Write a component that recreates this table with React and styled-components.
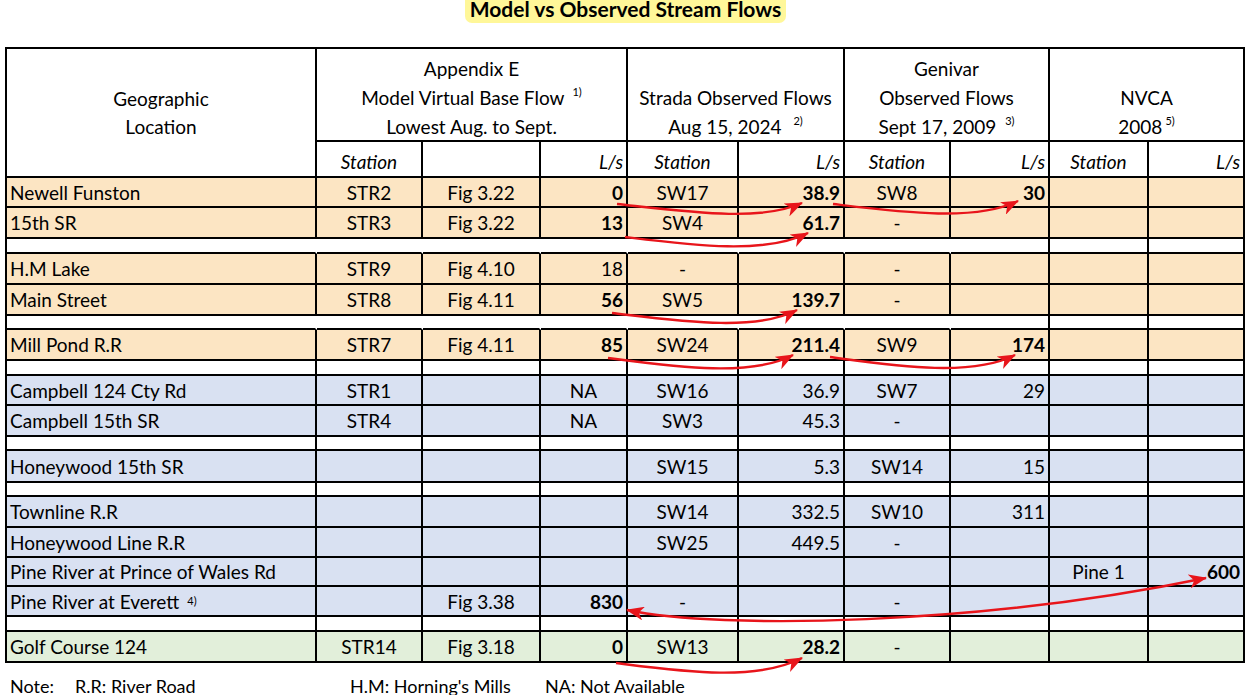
import React from "react";
import styled, { createGlobalStyle } from "styled-components";

const GlobalStyle = createGlobalStyle`
  html, body {
    margin: 0;
    padding: 0;
    background: #fff;
  }
  body {
    font-family: Lato, "Liberation Sans", sans-serif;
    color: #000;
    overflow: hidden;
  }
`;

const ORANGE = "#fce5c3";
const BLUE = "#d9e1f2";
const GREEN = "#e2efda";
const RED = "#e8151b";

const Page = styled.div`
  position: relative;
  width: 1246px;
  height: 695px;
  overflow: hidden;
  box-sizing: border-box;
  padding-left: 5px;
`;

const TitleBar = styled.div`
  height: 47px;
  display: flex;
  justify-content: center;
  align-items: flex-start;
`;

const Title = styled.h1`
  margin: -7px 0 0;
  padding: 4px 5px 2px;
  font-size: 21px;
  line-height: 24px;
  font-weight: 700;
  background: #fff799;
  border-radius: 7px;
`;

const Grid = styled.div`
  display: grid;
  grid-template-columns: 310px 106px 118px 87px 111px 106px 106px 99px 99px 96px;
  grid-template-rows:
    93px 36px 30px 31px 15px 31px 31px 14px 31px 15px 30px 31px 14px 32px
    14px 31px 30px 29px 30px 15px 31px;
  width: max-content;
  border-left: 2px solid #000;
  border-top: 2px solid #000;
`;

const Cell = styled.div`
  box-sizing: border-box;
  border-right: 2px solid ${(p) => (p.$open ? "transparent" : "#000")};
  border-bottom: 2px solid #000;
  background: ${(p) => p.$bg || "#fff"};
  display: flex;
  align-items: center;
  justify-content: ${(p) =>
    p.$align === "left"
      ? "flex-start"
      : p.$align === "right"
      ? "flex-end"
      : "center"};
  padding: 0 3px;
  font-size: 19px;
  font-weight: ${(p) => (p.$bold ? 700 : 400)};
  white-space: nowrap;
`;

const GroupHead = styled.div`
  box-sizing: border-box;
  grid-column: span ${(p) => p.$span || 1};
  grid-row: span ${(p) => p.$rows || 1};
  border-right: 2px solid #000;
  border-bottom: 2px solid #000;
  display: flex;
  flex-direction: column;
  align-items: center;
  justify-content: ${(p) => (p.$rows > 1 ? "center" : "flex-end")};
  font-size: 19px;
  line-height: ${(p) => (p.$rows > 1 ? "28px" : "29px")};
  white-space: nowrap;

  & > span:last-child {
    margin-bottom: ${(p) => (p.$rows > 1 ? "0" : "-1px")};
  }
`;

const SubHead = styled(Cell)`
  font-style: italic;
  align-items: flex-end;
  padding-bottom: 3px;
`;

const Sup = styled.sup`
  font-size: 11px;
  line-height: 0;
  vertical-align: 9px;
  margin-left: ${(p) => p.$gap || 0}px;
`;

const Notes = styled.div`
  display: flex;
  margin-top: 12px;
  padding-left: 5px;
  font-size: 18px;
  line-height: 22px;
  white-space: nowrap;
`;

const Note = styled.span`
  width: ${(p) => (p.$w ? `${p.$w}px` : "auto")};
`;

const Overlay = styled.svg`
  position: absolute;
  top: 0;
  left: 0;
  pointer-events: none;
`;

const rows = [
  { bg: ORANGE, c: ["Newell Funston", "STR2", "Fig 3.22", ["0", 1], "SW17", ["38.9", 1], "SW8", ["30", 1], "", ""] },
  { bg: ORANGE, c: ["15th SR", "STR3", "Fig 3.22", ["13", 1], "SW4", ["61.7", 1], "-", "", "", ""] },
  { blank: true, open: true },
  { bg: ORANGE, c: ["H.M Lake", "STR9", "Fig 4.10", ["18", 0], "-", "", "-", "", "", ""] },
  { bg: ORANGE, c: ["Main Street", "STR8", "Fig 4.11", ["56", 1], "SW5", ["139.7", 1], "-", "", "", ""] },
  { blank: true, open: true },
  { bg: ORANGE, c: ["Mill Pond R.R", "STR7", "Fig 4.11", ["85", 1], "SW24", ["211.4", 1], "SW9", ["174", 1], "", ""] },
  { blank: true },
  { bg: BLUE, c: ["Campbell 124 Cty Rd", "STR1", "", "NA", "SW16", ["36.9", 0], "SW7", ["29", 0], "", ""] },
  { bg: BLUE, c: ["Campbell 15th SR", "STR4", "", "NA", "SW3", ["45.3", 0], "-", "", "", ""] },
  { blank: true },
  { bg: BLUE, c: ["Honeywood 15th SR", "", "", "", "SW15", ["5.3", 0], "SW14", ["15", 0], "", ""] },
  { blank: true },
  { bg: BLUE, c: ["Townline R.R", "", "", "", "SW14", ["332.5", 0], "SW10", ["311", 0], "", ""] },
  { bg: BLUE, c: ["Honeywood Line R.R", "", "", "", "SW25", ["449.5", 0], "-", "", "", ""] },
  { bg: BLUE, c: ["Pine River at Prince of Wales Rd", "", "", "", "", "", "", "", "Pine 1", ["600", 1]] },
  { bg: BLUE, c: ["everett", "", "Fig 3.38", ["830", 1], "-", "", "-", "", "", ""] },
  { blank: true },
  { bg: GREEN, c: ["Golf Course 124", "STR14", "Fig 3.18", ["0", 1], "SW13", ["28.2", 1], "-", "", "", ""] },
];

const arrows = [
  "M617,204 C690,212 760,222 802,203",
  "M833,204 C900,212 975,222 1018,201",
  "M625,237 C690,245 765,255 808,233",
  "M612,313 C680,321 755,332 797,310",
  "M608,358 C670,366 750,378 793,355",
  "M830,357 C890,365 970,378 1015,355",
  "M616,663 C680,671 755,682 802,658",
];

function renderCell(value, i, bg) {
  if (i === 0) {
    return (
      <Cell key={i} $bg={bg} $align="left">
        {value === "everett" ? (
          <>
            Pine River at Everett<Sup $gap={8}>4)</Sup>
          </>
        ) : (
          value
        )}
      </Cell>
    );
  }
  if (Array.isArray(value)) {
    return (
      <Cell key={i} $bg={bg} $align="right" $bold={value[1] === 1}>
        {value[0]}
      </Cell>
    );
  }
  return (
    <Cell key={i} $bg={bg}>
      {value}
    </Cell>
  );
}

export default function App() {
  return (
    <Page>
      <GlobalStyle />
      <TitleBar>
        <Title>Model vs Observed Stream Flows</Title>
      </TitleBar>

      <Grid>
        <GroupHead $rows={2}>
          <span>Geographic</span>
          <span>Location</span>
        </GroupHead>
        <GroupHead $span={3}>
          <span>Appendix E</span>
          <span>
            Model Virtual Base Flow<Sup $gap={8}>1)</Sup>
          </span>
          <span>Lowest Aug. to Sept.</span>
        </GroupHead>
        <GroupHead $span={2}>
          <span>Strada Observed Flows</span>
          <span>
            Aug 15, 2024<Sup $gap={12}>2)</Sup>
          </span>
        </GroupHead>
        <GroupHead $span={2}>
          <span>Genivar</span>
          <span>Observed Flows</span>
          <span>
            Sept 17, 2009<Sup $gap={9}>3)</Sup>
          </span>
        </GroupHead>
        <GroupHead $span={2}>
          <span>NVCA</span>
          <span>
            2008<Sup $gap={3}>5)</Sup>
          </span>
        </GroupHead>

        <SubHead>Station</SubHead>
        <SubHead />
        <SubHead $align="right">L/s</SubHead>
        <SubHead>Station</SubHead>
        <SubHead $align="right">L/s</SubHead>
        <SubHead>Station</SubHead>
        <SubHead $align="right">L/s</SubHead>
        <SubHead>Station</SubHead>
        <SubHead $align="right">L/s</SubHead>

        {rows.map((row, r) =>
          row.blank
            ? Array.from({ length: 10 }, (_, i) => (
                <Cell key={`${r}-${i}`} $open={row.open && i < 7} />
              ))
            : row.c.map((v, i) => (
                <React.Fragment key={`${r}-${i}`}>
                  {renderCell(v, i, row.bg)}
                </React.Fragment>
              ))
        )}
      </Grid>

      <Notes>
        <Note $w={65}>Note:</Note>
        <Note $w={275}>R.R: River Road</Note>
        <Note $w={195}>H.M: Horning's Mills</Note>
        <Note>NA: Not Available</Note>
      </Notes>

      <Overlay width="1246" height="695" viewBox="0 0 1246 695">
        <defs>
          <marker
            id="head"
            viewBox="0 0 18 14"
            markerWidth="18"
            markerHeight="14"
            refX="17"
            refY="7"
            markerUnits="userSpaceOnUse"
            orient="auto-start-reverse"
          >
            <path d="M0,0 L18,7 L0,14 L5,7 Z" fill={RED} />
          </marker>
        </defs>
        {arrows.map((d, i) => (
          <path
            key={i}
            d={d}
            fill="none"
            stroke={RED}
            strokeWidth="2.4"
            markerEnd="url(#head)"
          />
        ))}
        <path
          d="M627,610 C720,630 980,625 1206,578"
          fill="none"
          stroke={RED}
          strokeWidth="2.4"
          markerStart="url(#head)"
          markerEnd="url(#head)"
        />
      </Overlay>
    </Page>
  );
}
